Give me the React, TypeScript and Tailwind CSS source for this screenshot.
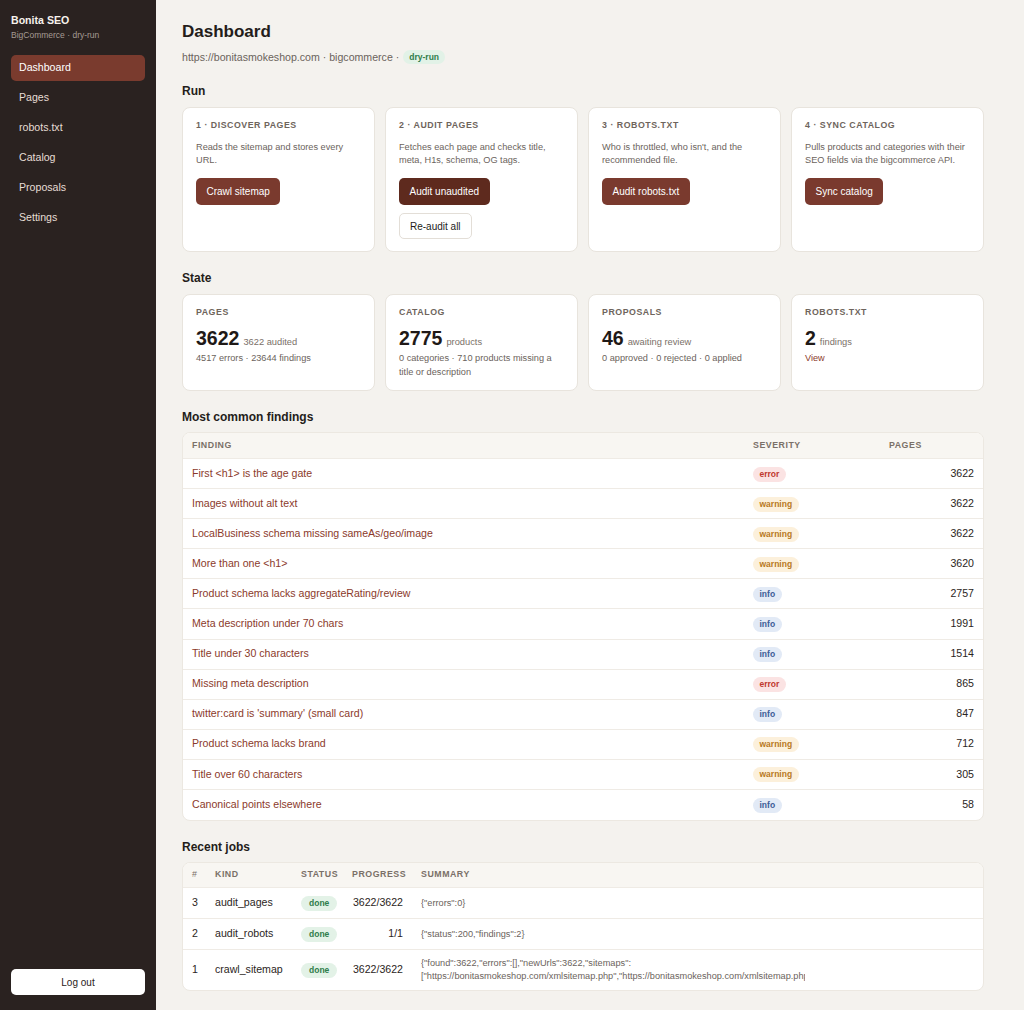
import React from 'react'

const nav = ['Dashboard', 'Pages', 'robots.txt', 'Catalog', 'Proposals', 'Settings']

const steps = [
  { title: '1 · Discover pages', text: 'Reads the sitemap and stores every URL.', actions: ['Crawl sitemap'] },
  { title: '2 · Audit pages', text: 'Fetches each page and checks title, meta, H1s, schema, OG tags.', actions: ['Audit unaudited', 'Re-audit all'] },
  { title: '3 · robots.txt', text: "Who is throttled, who isn't, and the recommended file.", actions: ['Audit robots.txt'] },
  { title: '4 · Sync catalog', text: 'Pulls products and categories with their SEO fields via the bigcommerce API.', actions: ['Sync catalog'] },
]

type Sev = 'error' | 'warning' | 'info'

const findings: { name: string; sev: Sev; pages: number }[] = [
  { name: 'First <h1> is the age gate', sev: 'error', pages: 3622 },
  { name: 'Images without alt text', sev: 'warning', pages: 3622 },
  { name: 'LocalBusiness schema missing sameAs/geo/image', sev: 'warning', pages: 3622 },
  { name: 'More than one <h1>', sev: 'warning', pages: 3620 },
  { name: 'Product schema lacks aggregateRating/review', sev: 'info', pages: 2757 },
  { name: 'Meta description under 70 chars', sev: 'info', pages: 1991 },
  { name: 'Title under 30 characters', sev: 'info', pages: 1514 },
  { name: 'Missing meta description', sev: 'error', pages: 865 },
  { name: "twitter:card is 'summary' (small card)", sev: 'info', pages: 847 },
  { name: 'Product schema lacks brand', sev: 'warning', pages: 712 },
  { name: 'Title over 60 characters', sev: 'warning', pages: 305 },
  { name: 'Canonical points elsewhere', sev: 'info', pages: 58 },
]

const sevStyle: Record<Sev, string> = {
  error: 'bg-[#fbe3e3] text-[#c0392f]',
  warning: 'bg-[#fcf0db] text-[#b8791e]',
  info: 'bg-[#e2eaf6] text-[#3d5c96]',
}

const jobs = [
  { id: 3, kind: 'audit_pages', progress: '3622/3622', summary: '{"errors":0}' },
  { id: 2, kind: 'audit_robots', progress: '1/1', summary: '{"status":200,"findings":2}' },
  {
    id: 1,
    kind: 'crawl_sitemap',
    progress: '3622/3622',
    summary:
      '{"found":3622,"errors":[],"newUrls":3622,"sitemaps":["https://bonitasmokeshop.com/xmlsitemap.php","https://bonitasmokeshop.com/xmlsitemap.php?type=products"]}',
  },
]

function SectionTitle({ children, tight }: { children: React.ReactNode; tight?: boolean }) {
  return (
    <h2
      className={
        tight
          ? 'mt-[18px] mb-[7px] text-[12px] leading-[16px] font-bold text-[#241d1a]'
          : 'mt-[18px] mb-[8px] text-[12px] leading-[16px] font-bold text-[#241d1a]'
      }
    >
      {children}
    </h2>
  )
}

function Label({ children }: { children: React.ReactNode }) {
  return (
    <div className="text-[8.8px] leading-[12px] font-bold uppercase tracking-[0.06em] text-[#6e645c]">{children}</div>
  )
}

export default function App() {
  return (
    <div className="flex min-h-screen bg-[#f4f2ee] font-['Liberation_Sans',Arial,sans-serif] text-[#241d1a]">
      <aside className="sticky top-0 flex h-screen w-[156px] shrink-0 flex-col bg-[#2a2220] px-[11px] pt-[14px] pb-[15px]">
        <div className="text-[10.6px] leading-[13px] font-bold text-[#f7f2ed]">Bonita SEO</div>
        <div className="mt-[3px] text-[8.5px] leading-[11px] text-[#a59b93]">BigCommerce · dry-run</div>
        <nav className="mt-[14px] flex flex-col gap-[4px]">
          {nav.map((item, i) => (
            <a
              key={item}
              className={
                i === 0
                  ? 'flex h-[26px] items-center rounded-[5px] bg-[#7a3b2e] px-[8px] text-[10.6px] text-white'
                  : 'flex h-[26px] items-center rounded-[5px] px-[8px] text-[10.6px] text-[#e6ddd5]'
              }
            >
              {item}
            </a>
          ))}
        </nav>
        <button className="mt-auto h-[26px] w-full rounded-[5px] bg-white text-[10px] text-[#2a2220]">Log out</button>
      </aside>

      <main className="min-w-0 flex-1 pl-[26px] pr-[40px] pt-[21px] pb-[14px]">
        <h1 className="text-[17px] leading-[22px] font-bold text-[#241d1a]">Dashboard</h1>
        <div className="mt-[6px] flex items-center gap-[4px] text-[10.6px] leading-[16px] text-[#6b635c]">
          <span>https://bonitasmokeshop.com · bigcommerce ·</span>
          <span className="rounded-full bg-[#e2f2e7] px-[6px] text-[8.5px] leading-[14px] font-bold text-[#2f7d4b]">
            dry-run
          </span>
        </div>

        <SectionTitle>Run</SectionTitle>
        <div className="grid grid-cols-4 gap-[10px]">
          {steps.map((s) => (
            <div key={s.title} className="rounded-[8px] border border-[#e8e4dd] bg-white px-[13px] pt-[11px] pb-[12px]">
              <Label>{s.title}</Label>
              <p className="mt-[10px] text-[9.2px] leading-[13px] text-[#6b635c]">{s.text}</p>
              <div className="mt-[11px] flex flex-col items-start gap-[8px]">
                {s.actions.map((a, i) =>
                  i === 0 ? (
                    <button
                      key={a}
                      className={
                        a === 'Audit unaudited'
                          ? 'h-[27px] rounded-[5px] bg-[#5e2a1e] px-[10.5px] text-[10px] text-white'
                          : 'h-[27px] rounded-[5px] bg-[#7a3a2e] px-[10.5px] text-[10px] text-white'
                      }
                    >
                      {a}
                    </button>
                  ) : (
                    <button
                      key={a}
                      className="h-[26px] rounded-[5px] border border-[#e3ded7] bg-white px-[10px] text-[10px] text-[#241d1a]"
                    >
                      {a}
                    </button>
                  ),
                )}
              </div>
            </div>
          ))}
        </div>

        <SectionTitle>State</SectionTitle>
        <div className="grid grid-cols-4 gap-[10px]">
          <StateCard label="Pages" value="3622" unit="3622 audited">
            4517 errors · 23644 findings
          </StateCard>
          <StateCard label="Catalog" value="2775" unit="products">
            0 categories · 710 products missing a title or description
          </StateCard>
          <StateCard label="Proposals" value="46" unit="awaiting review">
            0 approved · 0 rejected · 0 applied
          </StateCard>
          <StateCard label="robots.txt" value="2" unit="findings">
            <span className="text-[#8b3a2b]">View</span>
          </StateCard>
        </div>

        <SectionTitle tight>Most common findings</SectionTitle>
        <div className="overflow-hidden rounded-[8px] border border-[#ece8e1] bg-white">
          <table className="w-full table-fixed border-collapse">
            <colgroup>
              <col className="w-[561px]" />
              <col className="w-[136px]" />
              <col />
            </colgroup>
            <thead className="bg-[#f8f6f2]">
              <tr className="h-[25.5px] text-left text-[8.8px] font-bold uppercase tracking-[0.06em] text-[#7a7068]">
                <th className="px-[9px]">Finding</th>
                <th className="px-[9px]">Severity</th>
                <th className="px-[9px]">Pages</th>
              </tr>
            </thead>
            <tbody>
              {findings.map((f) => (
                <tr key={f.name} className="h-[30.1px] border-t border-[#efebe5] text-[10.6px]">
                  <td className="px-[9px] text-[#8b3a2b]">{f.name}</td>
                  <td className="px-[9px]">
                    <span
                      className={`inline-block rounded-full px-[6.5px] text-[8.5px] leading-[15px] font-bold ${sevStyle[f.sev]}`}
                    >
                      {f.sev}
                    </span>
                  </td>
                  <td className="px-[9px] text-right text-[#2b2522]">{f.pages}</td>
                </tr>
              ))}
            </tbody>
          </table>
        </div>

        <SectionTitle tight>Recent jobs</SectionTitle>
        <div className="overflow-hidden rounded-[8px] border border-[#ece8e1] bg-white">
          <table className="w-full table-fixed border-collapse">
            <colgroup>
              <col className="w-[23px]" />
              <col className="w-[86px]" />
              <col className="w-[51px]" />
              <col className="w-[69px]" />
              <col />
            </colgroup>
            <thead className="bg-[#f8f6f2]">
              <tr className="h-[25px] text-left text-[8.8px] font-bold uppercase tracking-[0.06em] text-[#7a7068]">
                <th className="pl-[9px] font-normal">#</th>
                <th className="px-[9px]">Kind</th>
                <th className="px-[9px]">Status</th>
                <th className="px-[9px]">Progress</th>
                <th className="px-[9px]">Summary</th>
              </tr>
            </thead>
            <tbody>
              {jobs.map((j) => (
                <tr key={j.id} className="h-[31px] border-t border-[#efebe5] text-[10.6px] text-[#2b2522]">
                  <td className="pl-[9px]">{j.id}</td>
                  <td className="px-[9px]">{j.kind}</td>
                  <td className="px-[9px]">
                    <span className="inline-block rounded-full bg-[#e3f2e7] px-[8px] text-[8.5px] leading-[15px] font-bold text-[#2f7d4b]">
                      done
                    </span>
                  </td>
                  <td className="px-[9px] text-right">{j.progress}</td>
                  <td className="px-[9px] py-[7px]">
                    <div className="max-h-[26px] max-w-[384px] overflow-hidden text-[9.2px] leading-[13px] text-[#6b635c]">
                      {j.summary}
                    </div>
                  </td>
                </tr>
              ))}
            </tbody>
          </table>
        </div>
      </main>
    </div>
  )
}

function StateCard({
  label,
  value,
  unit,
  children,
}: {
  label: string
  value: string
  unit: string
  children: React.ReactNode
}) {
  return (
    <div className="rounded-[8px] border border-[#e8e4dd] bg-white px-[13px] pt-[11px] pb-[11px]">
      <Label>{label}</Label>
      <div className="mt-[9px] flex items-baseline gap-[4px]">
        <span className="text-[19.5px] leading-[22px] font-bold text-[#1f1917]">{value}</span>
        <span className="text-[9.3px] leading-[12px] text-[#7a7068]">{unit}</span>
      </div>
      <div className="mt-[2px] text-[9.2px] leading-[14px] text-[#6b635c]">{children}</div>
    </div>
  )
}
